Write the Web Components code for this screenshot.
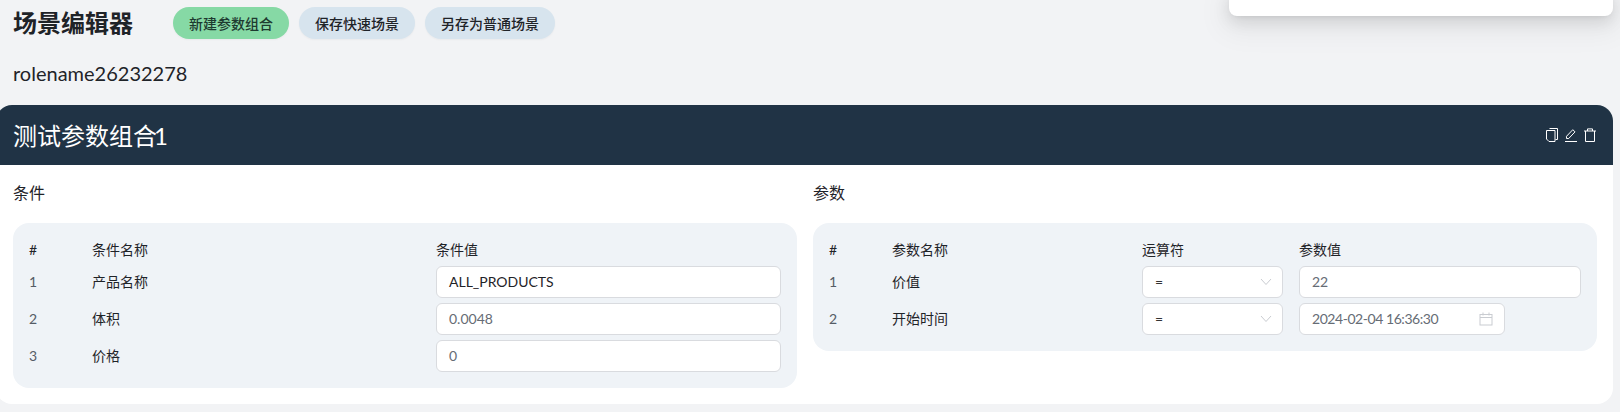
<!doctype html>
<html><head><meta charset="utf-8">
<style>
html,body{margin:0;padding:0;height:412px;overflow:hidden;background:#f2f3f5}
body{font-family:"Lato","Noto Sans CJK SC",sans-serif;color:#1f2328}
</style></head><body>
<scene-editor></scene-editor>
<script>
const FONT='"Lato","Noto Sans CJK SC",sans-serif';
class PillButton extends HTMLElement{constructor(){super();this.attachShadow({mode:'open'}).innerHTML=`<style>
:host{display:inline-flex;align-items:center;height:32px;padding:0 16px;border-radius:16px;background:#d7e4ee;font-size:14px;font-weight:500;color:#1f2328;white-space:nowrap;box-shadow:0 1px 2px rgba(0,0,0,.04)}
:host([variant=green]){background:#86d9a5;color:#1e3a30}
</style><slot></slot>`}}
customElements.define('pill-button',PillButton);

class FieldBox extends HTMLElement{
  constructor(){super();const r=this.attachShadow({mode:'open'});
  const kind=this.getAttribute('kind')||'text';
  const icon= kind==='select'?`<svg width="12" height="8" viewBox="0 0 12 8" fill="none" stroke="#c9ccd1" stroke-width="1"><path d="M1 1l5 5.5L11 1"/></svg>`:
   kind==='date'?`<svg width="14" height="14" viewBox="0 0 14 14" fill="none" stroke="#c9ccd1" stroke-width="1"><rect x="1" y="2.5" width="12" height="10.5"/><path d="M1 5.5h12M4 .5v3M10 .5v3"/></svg>`:'';
  r.innerHTML=`<style>
  :host{display:flex;align-items:center;justify-content:space-between;box-sizing:border-box;height:32px;background:#fff;border:1px solid #d9dbdf;border-radius:6px;padding:0 12px;font-size:14px;color:#666c75;min-width:0}
  :host([strong]){color:#1f2328}
  :host([kind=select]){padding-right:10px;color:#333}
  :host([kind=date]){padding-right:11px;letter-spacing:-.45px}
  span{padding-bottom:2px}
  </style><span><slot></slot></span>${icon}`}
}
customElements.define('field-box',FieldBox);

class DataPanel extends HTMLElement{constructor(){super();this.attachShadow({mode:'open'}).innerHTML=`<style>
:host{display:grid;align-self:start;box-sizing:border-box;background:#eff3f7;border-radius:16px;padding:16px;grid-template-columns:var(--cols);grid-template-rows:22px;row-gap:5px;align-items:center;align-content:start;font-size:14px}
</style><slot></slot>`}}
customElements.define('data-panel',DataPanel);

class TCell extends HTMLElement{constructor(){super();this.attachShadow({mode:'open'}).innerHTML=`<style>:host{display:block;padding-bottom:2px}:host([idx]){color:#555c66}</style><slot></slot>`}}
customElements.define('t-cell',TCell);

class ParamCard extends HTMLElement{constructor(){super();this.attachShadow({mode:'open'}).innerHTML=`<style>
:host{display:block;background:#fff;border-radius:16px;height:299px;margin:0 7px 0 -4px;overflow:hidden}
header{display:flex;align-items:center;justify-content:space-between;height:60px;box-sizing:border-box;background:#203345;color:#fff;padding:0 17px 0 17px;font-size:24px}
.title{padding-bottom:2px}
.icons{display:flex;gap:7px;align-items:center}
.body{display:grid;grid-template-columns:784px 784px;column-gap:16px;padding:0 0 0 17px}
</style><header><span class="title"><slot name="title"></slot></span><span class="icons"><slot name="icons"></slot></span></header>
<div class="body"><slot></slot></div>`}}
customElements.define('param-card',ParamCard);

class ParamSection extends HTMLElement{constructor(){super();this.attachShadow({mode:'open'}).innerHTML=`<style>
:host{display:block}
h4{margin:0;font-weight:400;font-size:16px;line-height:24px;padding:16px 0 18px}
</style><h4>${this.getAttribute('label')}</h4><slot></slot>`}}
customElements.define('param-section',ParamSection);

class SceneEditor extends HTMLElement{constructor(){super();this.attachShadow({mode:'open'}).innerHTML=`<style>
:host{display:block;font-family:${FONT};color:#1f2328}
.top{display:flex;align-items:center;height:32px;padding:7px 0 0 13px}
h1{margin:0;font-size:24px;font-weight:700;width:160px;line-height:32px}
.btns{display:flex;gap:10px}
.role{font-size:20px;line-height:24px;padding:22px 0 20px 13px}
.popup{position:absolute;left:1229px;top:-10px;width:384px;height:26px;background:#fff;border-radius:8px;box-shadow:0 6px 16px rgba(0,0,0,.1),0 3px 6px -4px rgba(0,0,0,.12),0 9px 28px 8px rgba(0,0,0,.05)}
.i{display:block}
.one{margin-left:-3px;letter-spacing:-4px}
</style>
<div class="top"><h1>场景编辑器</h1><div class="btns"><pill-button variant="green">新建参数组合</pill-button><pill-button>保存快速场景</pill-button><pill-button>另存为普通场景</pill-button></div></div>
<div class="role">rolename26232278</div>
<param-card>
<span slot="title">测试参数组合<span class="one">1</span></span>
<svg slot="icons" class="i" width="12" height="14" viewBox="0 0 12 14" fill="none" stroke="#fff" stroke-width="1"><path d="M.5 2.5h8.5v11h-6l-2.5-2.5zM3.5 .5h8v11H9.5"/></svg>
<svg slot="icons" class="i" width="12" height="14" viewBox="0 0 12 14" fill="none" stroke="#fff" stroke-width="1"><path d="M0 13.5h12M1.5 10.5V8.3l6.3-6.6 2.2 2.2-6.3 6.6z"/></svg>
<svg slot="icons" class="i" width="12" height="14" viewBox="0 0 12 14" fill="none" stroke="#fff" stroke-width="1"><path d="M0 3h12M3.5 3V.9h5V3M1.5 3v10.5h9V3"/></svg>
<param-section label="条件"><data-panel style="--cols:63px 344px 345px;height:165px">
<t-cell>#</t-cell><t-cell>条件名称</t-cell><t-cell>条件值</t-cell>
<t-cell idx>1</t-cell><t-cell>产品名称</t-cell><field-box strong>ALL_PRODUCTS</field-box>
<t-cell idx>2</t-cell><t-cell>体积</t-cell><field-box>0.0048</field-box>
<t-cell idx>3</t-cell><t-cell>价格</t-cell><field-box>0</field-box>
</data-panel></param-section>
<param-section label="参数"><data-panel style="--cols:63px 250px 141px 298px;height:128px">
<t-cell>#</t-cell><t-cell>参数名称</t-cell><t-cell>运算符</t-cell><t-cell style="padding-left:16px">参数值</t-cell>
<t-cell idx>1</t-cell><t-cell>价值</t-cell><field-box kind="select">=</field-box><div style="padding-left:16px"><field-box>22</field-box></div>
<t-cell idx>2</t-cell><t-cell>开始时间</t-cell><field-box kind="select">=</field-box><div style="padding-left:16px"><field-box kind="date" style="width:206px">2024-02-04 16:36:30</field-box></div>
</data-panel></param-section>
</param-card>
<div class="popup"></div>
`}}
customElements.define('scene-editor',SceneEditor);
</script>
</body></html>
